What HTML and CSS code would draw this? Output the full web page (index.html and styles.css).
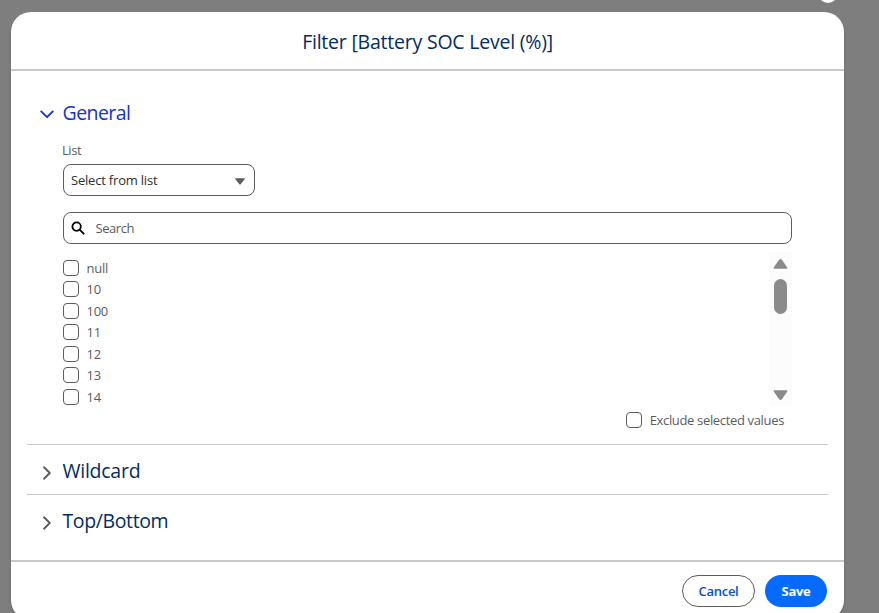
FILE: index.html
```html
<!DOCTYPE html>
<html lang="en">
<head>
<meta charset="utf-8">
<title>Filter</title>
<link rel="stylesheet" href="styles.css">
</head>
<body>
<span class="close"></span>
<main class="modal">
  <header class="modal-header"><h1><span class="t-title">Filter [Battery SOC Level (%)]</span></h1></header>
  <div class="modal-body">
    <section class="section general">
      <h2 class="heading open"><svg width="16" height="16" viewBox="0 0 16 16"><path d="M2.200 5.400 8 11.200l5.800-5.800" /></svg><span class="t-general">General</span></h2>
      <div class="content">
        <label class="label"><span class="t-list">List</span></label>
        <div class="select"><span class="t-select">Select from list</span><svg width="10" height="7" viewBox="0 0 10 7"><path d="M.5.3h9q.7.2.3.8L5.600 6.200q-.6.6-1.200 0L.2 1.100Q-.2.5.5.3z"/></svg></div>
        <div class="search"><svg width="14" height="14" viewBox="0 0 14 14"><circle cx="5.600" cy="5.600" r="4.200"/><path d="m8.800 8.800 3.900 3.900"/></svg><span class="t-search">Search</span></div>
        <div class="list">
          <ul>
            <li><i class="box"></i><span class="t-null">null</span></li>
            <li><i class="box"></i><span class="num">10</span></li>
            <li><i class="box"></i><span class="num">100</span></li>
            <li><i class="box"></i><span class="num">11</span></li>
            <li><i class="box"></i><span class="num">12</span></li>
            <li><i class="box"></i><span class="num">13</span></li>
            <li><i class="box"></i><span class="num">14</span></li>
          </ul>
          <div class="scrollbar">
            <svg width="15" height="11" viewBox="0 0 15 11"><path d="M1.300 10h12.400L8.300 2.200q-.8-1-1.600 0z"/></svg>
            <i class="thumb"></i>
            <svg class="down" width="15" height="11" viewBox="0 0 15 11"><path d="M1.300 1h12.400L8.300 8.800q-.8 1-1.600 0z"/></svg>
          </div>
        </div>
        <div class="exclude"><i class="box"></i><span class="t-exclude">Exclude selected values</span></div>
      </div>
    </section>
    <section class="section collapsed"><h2 class="heading"><svg width="16" height="16" viewBox="0 0 16 16"><path d="m5 2.300 5.800 5.700L5 13.700"/></svg><span class="t-wild">Wildcard</span></h2></section>
    <section class="section collapsed last"><h2 class="heading"><svg width="16" height="16" viewBox="0 0 16 16"><path d="m5 2.300 5.800 5.700L5 13.700"/></svg><span class="t-top">Top/Bottom</span></h2></section>
  </div>
  <footer class="modal-footer"><button class="cancel"><span class="t-cancel">Cancel</span></button><button class="save"><span class="t-save">Save</span></button></footer>
</main>
</body>
</html>
```
FILE: styles.css
```css
* { box-sizing: border-box; }
html, body { height: 100%; }
body { margin: 0; padding: 12px 35px 0 11px; overflow: hidden; background: #7e7e7e; font: 13px/18px "Open Sans", "Noto Sans", sans-serif; color: #5c5c5c; position: relative; }
h1, h2, ul { margin: 0; padding: 0; font-weight: 400; list-style: none; }
svg { flex: none; display: block; }
span { white-space: nowrap; }
.close { position: absolute; left: 818px; top: -17px; width: 20px; height: 20px; border-radius: 50%; background: #fff; }
.modal { height: 608px; background: #fff; border-radius: 20px; box-shadow: 0 2px 3px rgba(0,0,0,.16); display: flex; flex-direction: column; overflow: hidden; }
.modal-header { height: 59px; flex: none; border-bottom: 2px solid #c9c9c9; display: flex; justify-content: center; align-items: center; padding-top: 3px; }
h1 { font-size: 19.500px; line-height: 28px; color: #032d60; }
.modal-body { height: 489px; flex: none; padding: 0 16px; }
.section { border-bottom: 1px solid #c9c9c9; padding: 0 36px 0 12px; }
.general { height: 374px; padding-top: 28px; }
.heading { display: flex; align-items: center; gap: 7.500px; height: 28px; font-size: 19.500px; line-height: 28px; color: #032d60; }
.heading svg { fill: none; stroke: #5c5c5c; stroke-width: 1.900; stroke-linecap: round; stroke-linejoin: round; margin-top: 4px; }
.open { color: #1434cb; }
.heading.open svg { stroke: #1434cb; margin-top: 2px; }
.t-title { letter-spacing: -.22px; }
.t-general { letter-spacing: -.55px; }
.t-wild { letter-spacing: -.25px; }
.t-top { letter-spacing: -.38px; }
.t-list, .t-search { letter-spacing: -.45px; }
.t-select { letter-spacing: -.2px; }
.t-null, .num { letter-spacing: -.25px; }
.t-exclude { letter-spacing: -.34px; }
.t-cancel { letter-spacing: -.3px; }
.t-save { letter-spacing: -.3px; }
.content { padding-left: 24px; }
.label { display: block; height: 18px; margin: 14px 0 5px -1px; }
.select { width: 192px; height: 32px; border: 1px solid #5c5c5c; border-radius: 8px; padding: 0 9px 0 7px; display: flex; align-items: center; justify-content: space-between; color: #2e2e2e; }
.select svg { fill: #5c5c5c; margin-top: 3px; }
.search { height: 32px; margin-top: 16px; border: 1px solid #5c5c5c; border-radius: 8px; padding-left: 7px; display: flex; align-items: center; gap: 10.500px; }
.search svg { fill: none; stroke: #000; stroke-width: 1.800; stroke-linecap: round; }
.list { margin-top: 8px; height: 154px; overflow: hidden; display: flex; justify-content: space-between; }
ul { padding-top: 5px; }
li { height: 21.500px; display: flex; align-items: center; gap: 7.500px; }
.box { width: 16px; height: 16px; flex: none; border: 1px solid #5c5c5c; border-radius: 4px; }
.scrollbar { width: 23px; background: #fcfcfc; display: flex; flex-direction: column; align-items: center; padding: 6px 0 5px; }
.scrollbar svg { fill: #8b8b8b; stroke: #8b8b8b; stroke-width: 1.500; stroke-linejoin: round; }
.thumb { width: 13px; height: 35px; border-radius: 7px; background: #8b8b8b; margin-top: 10px; }
.scrollbar .down { margin-top: auto; }
.exclude { margin: 6px 8px 0 0; height: 16px; display: flex; align-items: center; justify-content: flex-end; gap: 8px; }
.collapsed { height: 50px; padding-top: 12px; }
.last { border: 0; }
.modal-footer { flex: 1; border-top: 2px solid #c9c9c9; padding: 13px 17px 0 0; display: flex; justify-content: flex-end; gap: 10px; }
button { height: 32px; border-radius: 16px; padding: 0; font: 600 13px/30px "Open Sans", sans-serif; }
.cancel { width: 73px; border: 1px solid #5c5c5c; background: #fff; color: #0250d9; }
.save { width: 62px; border: 0; background: #066afe; color: #fff; font-weight: 700; }
```
